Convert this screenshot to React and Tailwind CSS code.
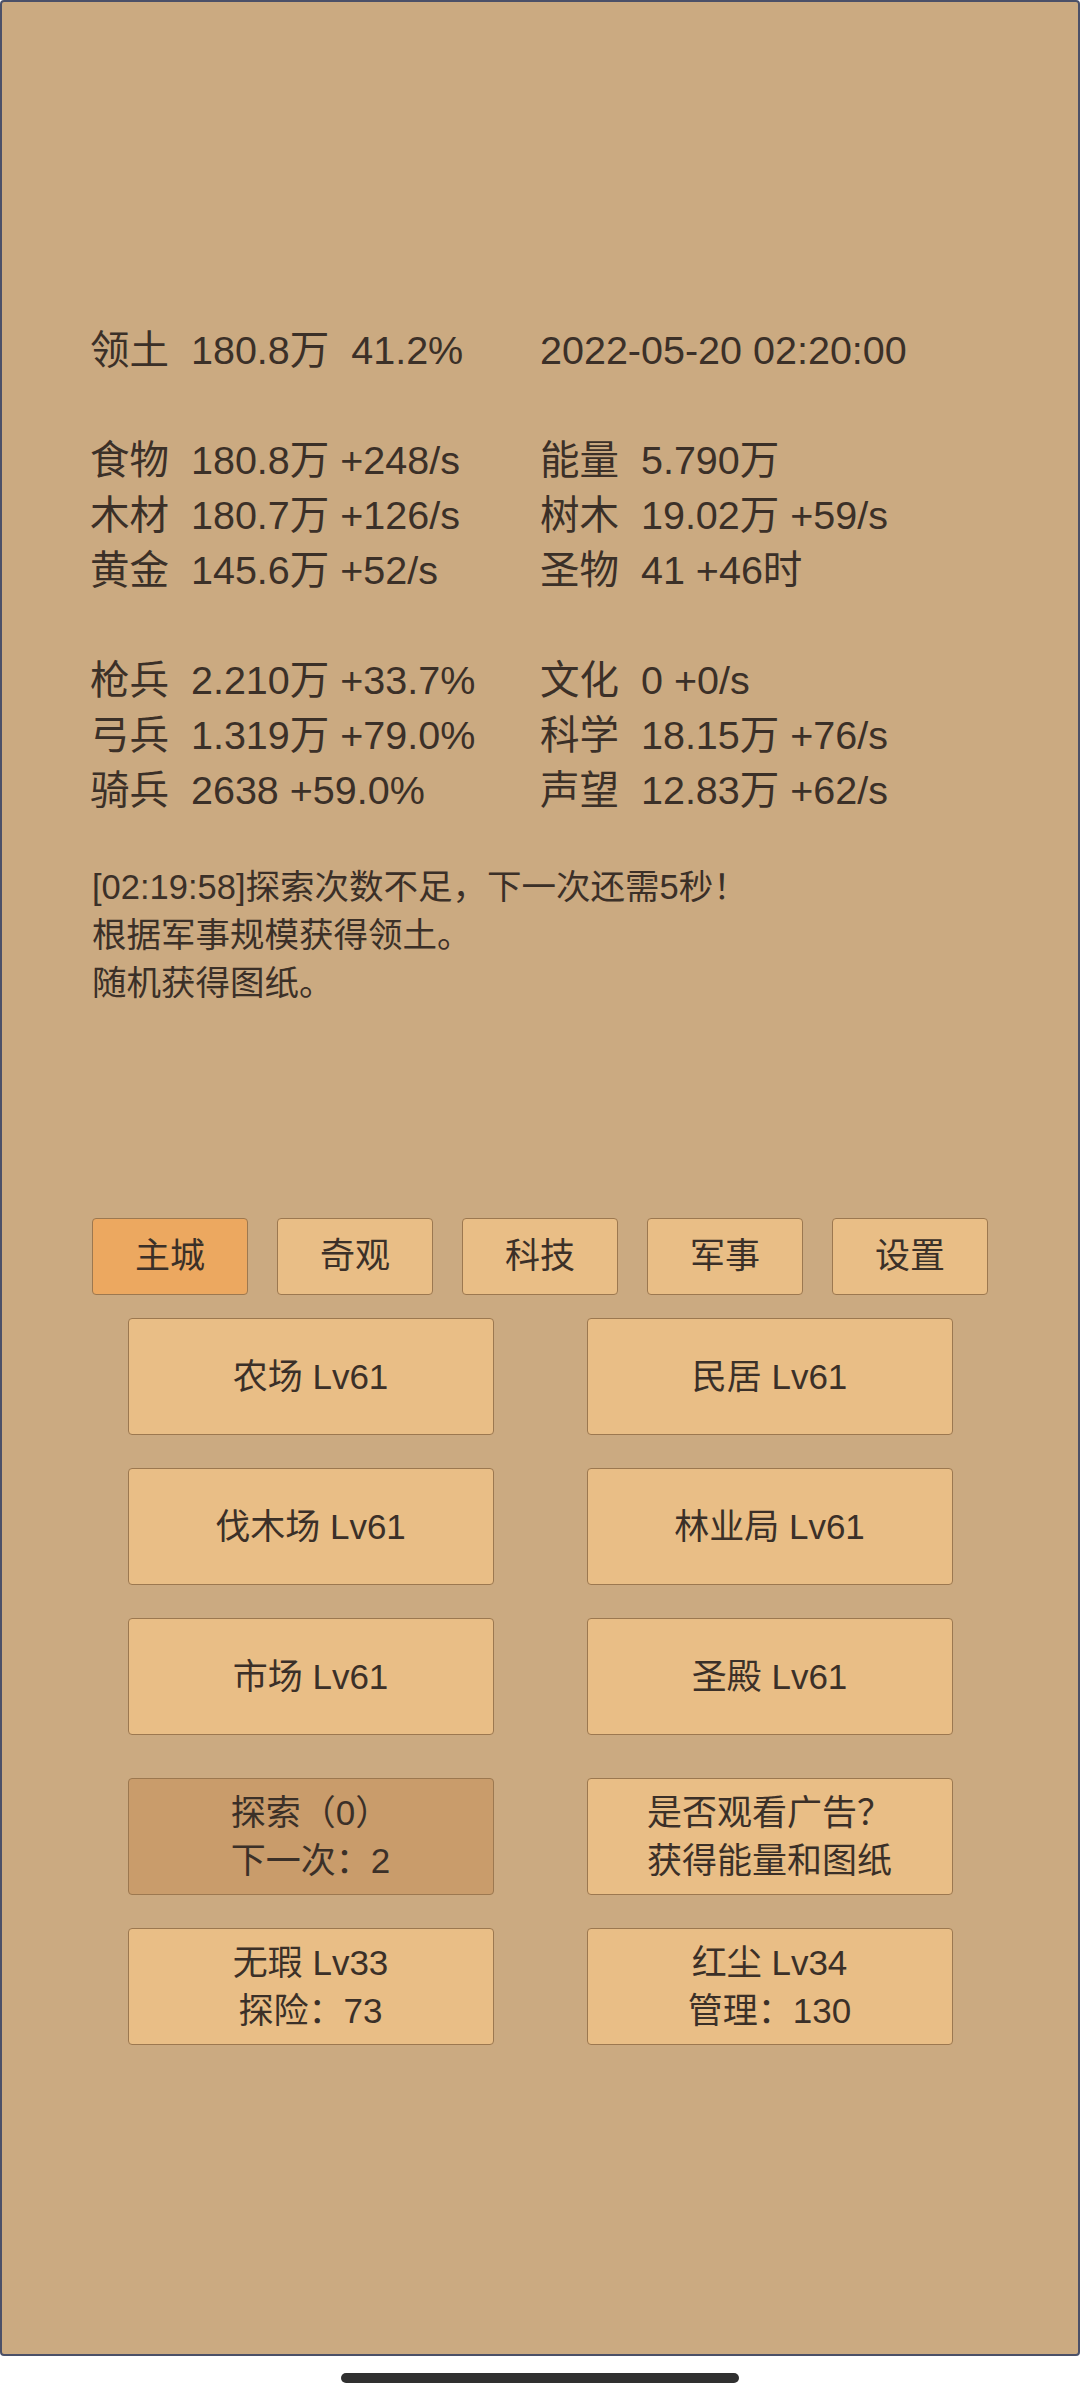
import React from "react";

const FONT = {
  fontFamily: '"Liberation Sans", "Noto Sans CJK SC", sans-serif',
};

const stats = [
  [["领土", "180.8万  41.2%"], [null, "2022-05-20 02:20:00"]],
  null,
  [["食物", "180.8万 +248/s"], ["能量", "5.790万"]],
  [["木材", "180.7万 +126/s"], ["树木", "19.02万 +59/s"]],
  [["黄金", "145.6万 +52/s"], ["圣物", "41 +46时"]],
  null,
  [["枪兵", "2.210万 +33.7%"], ["文化", "0 +0/s"]],
  [["弓兵", "1.319万 +79.0%"], ["科学", "18.15万 +76/s"]],
  [["骑兵", "2638 +59.0%"], ["声望", "12.83万 +62/s"]],
];

const tabs = ["主城", "奇观", "科技", "军事", "设置"];

const buildings = ["农场 Lv61", "民居 Lv61", "伐木场 Lv61", "林业局 Lv61", "市场 Lv61", "圣殿 Lv61"];

const Cell = ({ cell }) => {
  const [label, value] = cell;
  return (
    <div className="w-[450px] whitespace-pre">
      {label ? `${label}  ${value}` : value}
    </div>
  );
};

const Btn = ({ children, dark }) => (
  <div
    className={`w-[366px] h-[117px] flex flex-col items-center justify-center rounded-[4px] border border-[#9c7850] text-[35px] leading-[48px] text-center ${
      dark ? "bg-[#c99c6b]" : "bg-[#e9be86]"
    }`}
  >
    {children}
  </div>
);

export default function App() {
  return (
    <div className="w-[1080px] h-[2400px] bg-white flex flex-col" style={FONT}>
      <div className="h-[2356px] border-2 border-[#4b5068] rounded-[4px] bg-[#cbaa81] text-[#3b3028] flex flex-col">
        {/* stats */}
        <div className="pt-[321px] pl-[88px] text-[39.5px] leading-[55px]">
          {stats.map((row, i) =>
            row ? (
              <div key={i} className="flex">
                <Cell cell={row[0]} />
                <Cell cell={row[1]} />
              </div>
            ) : (
              <div key={i} className="h-[55px]" />
            )
          )}
        </div>

        {/* log */}
        <div className="mt-[45px] pl-[90px] text-[34.5px] leading-[48px]">
          <div>[02:19:58]探索次数不足，下一次还需5秒！</div>
          <div>根据军事规模获得领土。</div>
          <div>随机获得图纸。</div>
        </div>

        {/* tabs */}
        <div className="mt-[211px] flex justify-center gap-[29px]">
          {tabs.map((t, i) => (
            <div
              key={t}
              className={`w-[156px] h-[77px] flex items-center justify-center rounded-[4px] border border-[#9c7850] text-[35px] ${
                i === 0 ? "bg-[#eca860]" : "bg-[#e9be86]"
              }`}
            >
              {t}
            </div>
          ))}
        </div>

        {/* buildings */}
        <div className="mt-[23px] grid grid-cols-[366px_366px] justify-center gap-x-[93px] gap-y-[33px]">
          {buildings.map((b) => (
            <Btn key={b}>{b}</Btn>
          ))}
        </div>

        <div className="mt-[43px] grid grid-cols-[366px_366px] justify-center gap-x-[93px] gap-y-[33px]">
          <Btn dark>
            <div>探索（0）</div>
            <div>下一次：2</div>
          </Btn>
          <Btn>
            <div>是否观看广告？</div>
            <div>获得能量和图纸</div>
          </Btn>
          <Btn>
            <div>无瑕 Lv33</div>
            <div>探险：73</div>
          </Btn>
          <Btn>
            <div>红尘 Lv34</div>
            <div>管理：130</div>
          </Btn>
        </div>
      </div>

      <div className="flex justify-center pt-[17px]">
        <div className="w-[398px] h-[10px] rounded-full bg-[#303030]" />
      </div>
    </div>
  );
}
